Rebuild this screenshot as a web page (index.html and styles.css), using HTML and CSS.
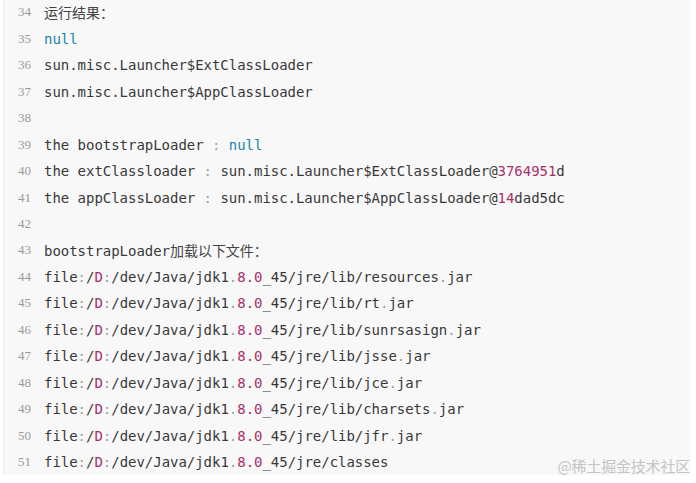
FILE: index.html
```html
<!DOCTYPE html>
<html>
<head>
<meta charset="utf-8">
<link rel="stylesheet" href="styles.css">
</head>
<body>
<div class="code">
  <div class="row"><span class="ln">34</span><span class="src cn">运行结果：</span></div>
  <div class="row"><span class="ln">35</span><span class="src"><span class="kw">null</span></span></div>
  <div class="row"><span class="ln">36</span><span class="src">sun.misc.Launcher$ExtClassLoader</span></div>
  <div class="row"><span class="ln">37</span><span class="src">sun.misc.Launcher$AppClassLoader</span></div>
  <div class="row"><span class="ln">38</span><span class="src"></span></div>
  <div class="row"><span class="ln">39</span><span class="src">the bootstrapLoader <span class="p">:</span> <span class="kw">null</span></span></div>
  <div class="row"><span class="ln">40</span><span class="src">the extClassloader <span class="p">:</span> sun.misc.Launcher$ExtClassLoader@<span class="n">3764951</span>d</span></div>
  <div class="row"><span class="ln">41</span><span class="src">the appClassLoader <span class="p">:</span> sun.misc.Launcher$AppClassLoader@<span class="n">14</span>dad5dc</span></div>
  <div class="row"><span class="ln">42</span><span class="src"></span></div>
  <div class="row"><span class="ln">43</span><span class="src">bootstrapLoader<span class="cn">加载以下文件：</span></span></div>
  <div class="row"><span class="ln">44</span><span class="src">file<span class="p">:</span>/<span class="n">D</span><span class="p">:</span>/dev/Java/jdk1<span class="p">.</span><span class="n">8.0</span>_45/jre/lib/resources<span class="p">.</span>jar</span></div>
  <div class="row"><span class="ln">45</span><span class="src">file<span class="p">:</span>/<span class="n">D</span><span class="p">:</span>/dev/Java/jdk1<span class="p">.</span><span class="n">8.0</span>_45/jre/lib/rt<span class="p">.</span>jar</span></div>
  <div class="row"><span class="ln">46</span><span class="src">file<span class="p">:</span>/<span class="n">D</span><span class="p">:</span>/dev/Java/jdk1<span class="p">.</span><span class="n">8.0</span>_45/jre/lib/sunrsasign<span class="p">.</span>jar</span></div>
  <div class="row"><span class="ln">47</span><span class="src">file<span class="p">:</span>/<span class="n">D</span><span class="p">:</span>/dev/Java/jdk1<span class="p">.</span><span class="n">8.0</span>_45/jre/lib/jsse<span class="p">.</span>jar</span></div>
  <div class="row"><span class="ln">48</span><span class="src">file<span class="p">:</span>/<span class="n">D</span><span class="p">:</span>/dev/Java/jdk1<span class="p">.</span><span class="n">8.0</span>_45/jre/lib/jce<span class="p">.</span>jar</span></div>
  <div class="row"><span class="ln">49</span><span class="src">file<span class="p">:</span>/<span class="n">D</span><span class="p">:</span>/dev/Java/jdk1<span class="p">.</span><span class="n">8.0</span>_45/jre/lib/charsets<span class="p">.</span>jar</span></div>
  <div class="row"><span class="ln">50</span><span class="src">file<span class="p">:</span>/<span class="n">D</span><span class="p">:</span>/dev/Java/jdk1<span class="p">.</span><span class="n">8.0</span>_45/jre/lib/jfr<span class="p">.</span>jar</span></div>
  <div class="row"><span class="ln">51</span><span class="src">file<span class="p">:</span>/<span class="n">D</span><span class="p">:</span>/dev/Java/jdk1<span class="p">.</span><span class="n">8.0</span>_45/jre/classes</span></div>
</div>
<div class="wm">@稀土掘金技术社区</div>
</body>
</html>
```

FILE: styles.css
```css
html, body {
  margin: 0;
  padding: 0;
  background: #ffffff;
}
body {
  position: relative;
  width: 696px;
  height: 483px;
  overflow: hidden;
}
.code {
  margin: -1px 0 0 3px;
  width: 687px;
  background: #f8f8f8;
  border-left: 1px solid #ececec;
  box-sizing: border-box;
}
.row {
  display: flex;
  height: 26.47px;
  align-items: center;
}
.ln {
  width: 27px;
  text-align: right;
  font-family: "Liberation Serif", serif;
  font-size: 13px;
  color: #9a9a9a;
  flex: none;
}
.src {
  margin-left: 13px;
  font-family: "DejaVu Sans Mono", "Noto Sans CJK SC", monospace;
  font-size: 14px;
  color: #383838;
  white-space: pre;
  letter-spacing: -0.03px;
}
.cn {
  font-family: "Noto Sans CJK SC", sans-serif;
  color: #444;
}
.kw { color: #1a85a8; }
.n { color: #a8306a; }
.p { color: #a0a0a0; }
.wm {
  position: absolute;
  right: 6px;
  bottom: 7px;
  font-family: "Noto Sans CJK SC", sans-serif;
  font-size: 15px;
  color: #c4c4c4;
  letter-spacing: -0.2px;
}
```
